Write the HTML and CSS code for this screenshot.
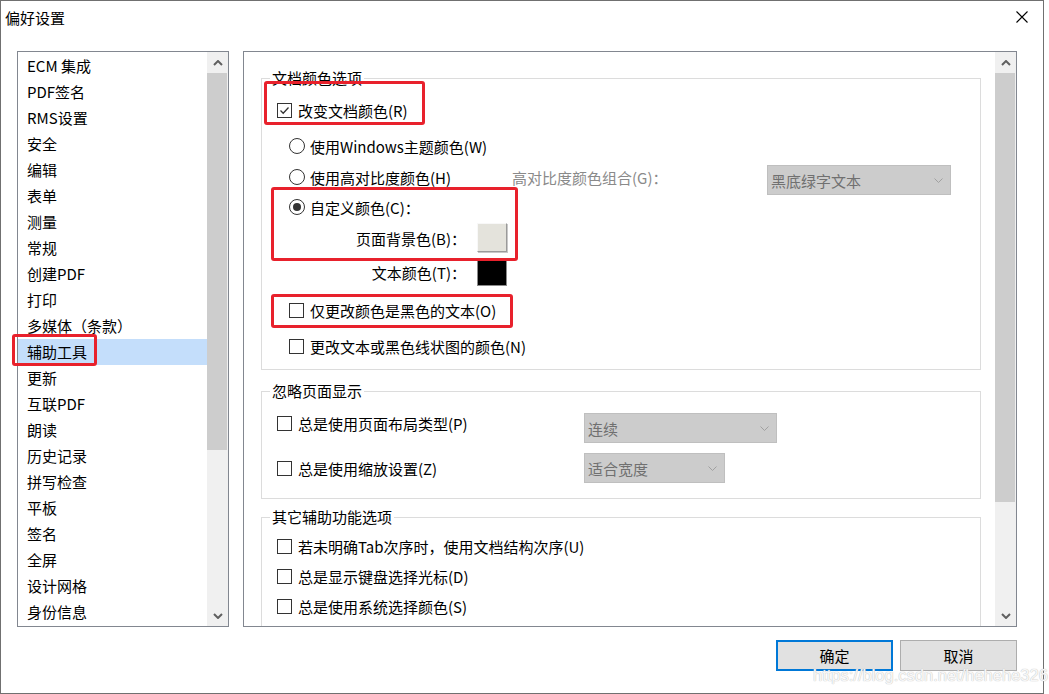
FILE: index.html
```html
<!DOCTYPE html>
<html lang="zh-CN">
<head>
<meta charset="utf-8">
<title>偏好设置</title>
<link rel="stylesheet" href="styles.css">
</head>
<body>
<div class="dialog">
  <div class="titlebar">
    <span class="title">偏好设置</span>
    <svg class="close" width="12" height="12" viewBox="0 0 12 12"><path d="M0.5 0.5 L11.5 11.5 M11.5 0.5 L0.5 11.5" stroke="#000" stroke-width="1.1" fill="none"/></svg>
  </div>
  <div class="main">
    <div class="listbox">
      <ul class="items">
        <li>ECM 集成</li>
        <li>PDF签名</li>
        <li>RMS设置</li>
        <li>安全</li>
        <li>编辑</li>
        <li>表单</li>
        <li>测量</li>
        <li>常规</li>
        <li>创建PDF</li>
        <li>打印</li>
        <li>多媒体（条款）</li>
        <li class="selected">辅助工具</li>
        <li>更新</li>
        <li>互联PDF</li>
        <li>朗读</li>
        <li>历史记录</li>
        <li>拼写检查</li>
        <li>平板</li>
        <li>签名</li>
        <li>全屏</li>
        <li>设计网格</li>
        <li>身份信息</li>
      </ul>
      <div class="scrollbar">
        <div class="sb-btn"><svg width="10" height="6" viewBox="0 0 10 6"><polyline points="1,5 5,1 9,5" fill="none" stroke="#606060" stroke-width="2"/></svg></div>
        <div class="sb-thumb sb-thumb-left"></div>
        <div class="sb-track"></div>
        <div class="sb-btn"><svg width="10" height="6" viewBox="0 0 10 6"><polyline points="1,1 5,5 9,1" fill="none" stroke="#606060" stroke-width="2"/></svg></div>
      </div>
    </div>

    <div class="panel">
      <div class="panel-content">
        <div class="group g1">
          <span class="legend">文档颜色选项</span>
          <div class="row r1 ind1">
            <span class="cb checked"><svg width="13" height="13" viewBox="0 0 13 13"><polyline points="2.5,6.5 5.2,9.2 10.5,3.5" fill="none" stroke="#333" stroke-width="1.3"/></svg></span>
            <span>改变文档颜色(R)</span>
          </div>
          <div class="row r2 ind2">
            <span class="rb"></span><span>使用Windows主题颜色(W)</span>
          </div>
          <div class="row r3 ind2">
            <div class="rb-part"><span class="rb"></span><span>使用高对比度颜色(H)</span></div>
            <span class="gray-label">高对比度颜色组合(G)：</span>
            <div class="dropdown dd-hc"><span>黑底绿字文本</span><svg width="9" height="5" viewBox="0 0 9 5"><polyline points="0.5,0.5 4.5,4.5 8.5,0.5" fill="none" stroke="#a0a0a0" stroke-width="1"/></svg></div>
          </div>
          <div class="row r4 ind2">
            <span class="rb on"></span><span>自定义颜色(C)：</span>
          </div>
          <div class="row r5 swrow">
            <span class="sw-label">页面背景色(B)：</span>
            <span class="swatch sw-bg"></span>
          </div>
          <div class="row r6 swrow">
            <span class="sw-label">文本颜色(T)：</span>
            <span class="swatch sw-text"></span>
          </div>
          <div class="row r7 ind2">
            <span class="cb"></span><span>仅更改颜色是黑色的文本(O)</span>
          </div>
          <div class="row r8 ind2">
            <span class="cb"></span><span>更改文本或黑色线状图的颜色(N)</span>
          </div>
        </div>

        <div class="group g2">
          <span class="legend">忽略页面显示</span>
          <div class="row r9 ind1 tall">
            <div class="cb-part"><span class="cb"></span><span>总是使用页面布局类型(P)</span></div>
            <div class="dropdown dd-layout"><span>连续</span><svg width="9" height="5" viewBox="0 0 9 5"><polyline points="0.5,0.5 4.5,4.5 8.5,0.5" fill="none" stroke="#a0a0a0" stroke-width="1"/></svg></div>
          </div>
          <div class="row r10 ind1 tall">
            <div class="cb-part"><span class="cb"></span><span>总是使用缩放设置(Z)</span></div>
            <div class="dropdown dd-zoom"><span>适合宽度</span><svg width="9" height="5" viewBox="0 0 9 5"><polyline points="0.5,0.5 4.5,4.5 8.5,0.5" fill="none" stroke="#a0a0a0" stroke-width="1"/></svg></div>
          </div>
        </div>

        <div class="group g3">
          <span class="legend">其它辅助功能选项</span>
          <div class="row r11 ind1"><span class="cb"></span><span>若未明确Tab次序时，使用文档结构次序(U)</span></div>
          <div class="row r12 ind1"><span class="cb"></span><span>总是显示键盘选择光标(D)</span></div>
          <div class="row r12 ind1"><span class="cb"></span><span>总是使用系统选择颜色(S)</span></div>
        </div>
      </div>
      <div class="scrollbar">
        <div class="sb-btn"><svg width="10" height="6" viewBox="0 0 10 6"><polyline points="1,5 5,1 9,5" fill="none" stroke="#606060" stroke-width="2"/></svg></div>
        <div class="sb-thumb sb-thumb-right"></div>
        <div class="sb-track"></div>
        <div class="sb-btn"><svg width="10" height="6" viewBox="0 0 10 6"><polyline points="1,1 5,5 9,1" fill="none" stroke="#606060" stroke-width="2"/></svg></div>
      </div>
    </div>
  </div>
  <div class="footer">
    <button class="btn btn-default">确定</button>
    <button class="btn">取消</button>
  </div>
</div>

<div class="mark mark-a"></div>
<div class="mark mark-b"></div>
<div class="mark mark-c"></div>
<div class="mark mark-d"></div>
<div class="watermark">https://blog.csdn.net/hehehe326</div>
</body>
</html>
```

FILE: styles.css
```css
* { box-sizing: border-box; }
html, body { margin: 0; padding: 0; background: #fff; }
body {
  width: 1049px;
  height: 694px;
  overflow: hidden;
  font-family: "Noto Sans CJK SC", "Microsoft YaHei", sans-serif;
  font-size: 15px;
  color: #000;
}
.dialog {
  width: 1044px;
  height: 694px;
  border: 1px solid #707070;
  background: #fff;
  display: flex;
  flex-direction: column;
}
.titlebar {
  height: 32px;
  flex: none;
  display: flex;
  align-items: center;
  justify-content: space-between;
  padding: 0 15px 0 4px;
}
.title { font-size: 15px; line-height: 20px; position: relative; top: 1px; }
.close { display: block; }

.main {
  display: flex;
  gap: 14px;
  margin-top: 18px;
  padding-left: 16px;
  height: 576px;
  flex: none;
}
.listbox {
  width: 212px;
  height: 576px;
  border: 1px solid #828790;
  display: flex;
}
.items {
  list-style: none;
  margin: 0;
  padding: 1px 0 0 0;
  width: 189px;
  overflow: hidden;
}
.items li {
  height: 26px;
  line-height: 26px;
  padding-left: 9px;
  white-space: nowrap;
}
.items li.selected { background: #c4defb; }

.scrollbar {
  width: 21px;
  display: flex;
  flex-direction: column;
  background: #f0f0f0;
  flex: none;
}
.sb-btn {
  height: 21px;
  flex: none;
  display: flex;
  align-items: center;
  justify-content: center;
}
.sb-btn svg { display: block; }
.sb-thumb { background: #cdcdcd; flex: none; margin: 0 1px 0 0; }
.sb-thumb-left { height: 377px; }
.sb-thumb-right { height: 429px; }
.sb-track { flex: 1; }

.panel {
  width: 774px;
  height: 576px;
  border: 1px solid #828790;
  display: flex;
}
.panel-content {
  flex: 1;
  overflow: hidden;
  padding-left: 17px;
}
.group {
  position: relative;
  width: 720px;
  border: 1px solid #dcdcdc;
}
.legend {
  position: absolute;
  left: 8px;
  top: -12px;
  line-height: 21px;
  padding: 0 2px;
  background: #fff;
  white-space: nowrap;
}
.g1 { margin-top: 26px; height: 292px; }
.g2 { margin-top: 21px; height: 108px; }
.g3 { margin-top: 18px; height: 200px; }

.row {
  display: flex;
  align-items: center;
  height: 26px;
  white-space: nowrap;
}
.row.tall { height: 30px; }
.ind1 { padding-left: 15px; }
.ind2 { padding-left: 27px; }
.r1 { margin-top: 18px; }
.r2 { margin-top: 10px; }
.r3 { margin-top: 5px; }
.r4 { margin-top: 4px; }
.r5 { margin-top: 3px; height: 30px; }
.r6 { margin-top: 4px; height: 30px; }
.r7 { margin-top: 10px; }
.r8 { margin-top: 10px; }
.r9 { margin-top: 16px; }
.r10 { margin-top: 15px; }
.r11 { margin-top: 15px; }
.r12 { margin-top: 4px; }

.cb {
  width: 15px;
  height: 15px;
  border: 1px solid #333;
  background: #fff;
  margin-right: 6px;
  flex: none;
  display: flex;
  align-items: center;
  justify-content: center;
}
.cb svg { display: block; }
.rb {
  width: 16px;
  height: 16px;
  border: 1px solid #333;
  border-radius: 50%;
  background: #fff;
  margin-right: 5px;
  flex: none;
  display: flex;
  align-items: center;
  justify-content: center;
}
.rb.on::after {
  content: "";
  width: 8px;
  height: 8px;
  border-radius: 50%;
  background: #333;
}
.rb-part { width: 223px; display: flex; align-items: center; flex: none; }
.cb-part { width: 307px; display: flex; align-items: center; flex: none; }
.gray-label { width: 255px; color: #8a8a8a; flex: none; }

.dropdown {
  height: 30px;
  background: #cccccc;
  border: 1px solid #bfbfbf;
  display: flex;
  align-items: center;
  justify-content: space-between;
  padding: 0 7px 0 3px;
  color: #707070;
  flex: none;
}
.dropdown svg { display: block; }
.dd-hc { width: 184px; align-self: flex-start; margin-top: 1px; }
.dd-layout { width: 193px; align-self: flex-start; margin-top: 5px; }
.dd-zoom { width: 141px; }

.swrow { padding-left: 0; }
.sw-label { width: 204px; text-align: right; flex: none; }
.swatch {
  width: 30px;
  height: 29px;
  margin-left: 11px;
  flex: none;
  align-self: flex-start;
}
.sw-bg {
  background: #e4e3dc;
  border-top: 1px solid #f8f8f8;
  border-left: 1px solid #f8f8f8;
  border-right: 1px solid #9a9a9a;
  border-bottom: 1px solid #9a9a9a;
  box-shadow: 1px 1px 0 #c8c8c8;
}
.sw-text {
  background: #000;
  border: 1px solid #8a8a8a;
  height: 28px;
  margin-top: 1px;
}

.footer {
  display: flex;
  justify-content: flex-end;
  gap: 7px;
  margin-top: 13px;
  padding-right: 26px;
}
.btn {
  width: 117px;
  height: 31px;
  background: #e1e1e1;
  border: 1px solid #adadad;
  font-family: "Noto Sans CJK SC", "Microsoft YaHei", sans-serif;
  font-size: 15px;
  color: #000;
  padding: 0;
}
.btn-default { border: 2px solid #0078d7; }

.mark {
  position: absolute;
  border: 3px solid #e8212c;
  border-radius: 3px;
}
.mark-a { left: 12px; top: 334px; width: 85px; height: 32px; }
.mark-b { left: 264px; top: 81px; width: 161px; height: 44px; }
.mark-c { left: 271px; top: 187px; width: 247px; height: 74px; }
.mark-d { left: 271px; top: 294px; width: 242px; height: 34px; }

.watermark {
  position: absolute;
  left: 813px;
  top: 665px;
  font-family: "Liberation Sans", Arial, sans-serif;
  font-size: 16.5px;
  line-height: 20px;
  color: rgba(255,255,255,0.9);
  text-shadow: 0 0 1px #c4c4c4, 0 0 1px #c4c4c4;
  white-space: nowrap;
}
```
